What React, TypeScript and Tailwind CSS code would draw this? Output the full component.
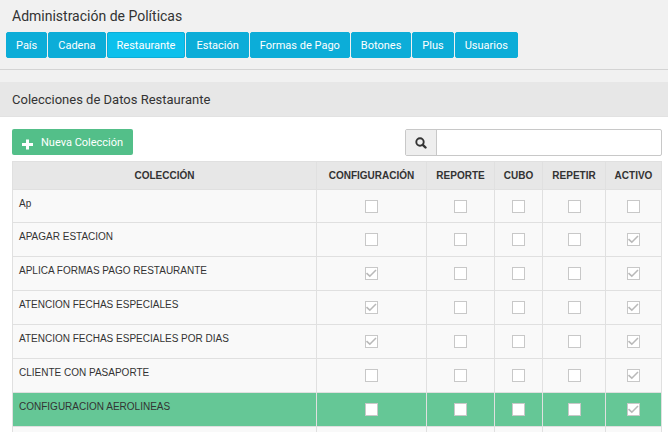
import { useState } from "react";

const tabs = ["País", "Cadena", "Restaurante", "Estación", "Formas de Pago", "Botones", "Plus", "Usuarios"];

const flags = ["Configuración", "Reporte", "Cubo", "Repetir", "Activo"];

type Row = { name: string; on: string[]; selected?: boolean };

const rows: Row[] = [
  { name: "Ap", on: [] },
  { name: "APAGAR ESTACION", on: ["Activo"] },
  { name: "APLICA FORMAS PAGO RESTAURANTE", on: ["Configuración", "Activo"] },
  { name: "ATENCION FECHAS ESPECIALES", on: ["Configuración", "Activo"] },
  { name: "ATENCION FECHAS ESPECIALES POR DIAS", on: ["Configuración", "Activo"] },
  { name: "CLIENTE CON PASAPORTE", on: ["Activo"] },
  { name: "CONFIGURACION AEROLINEAS", on: ["Activo"], selected: true },
];

function PlusIcon() {
  return (
    <svg viewBox="0 0 11 11" className="mt-0.5 size-[11px]" fill="currentColor" aria-hidden="true">
      <path d="M4 0.5h3v3.5h4v3h-4v3.5h-3V7H0V4h4z" />
    </svg>
  );
}

function SearchIcon() {
  return (
    <svg viewBox="0 0 12 12" className="size-3" fill="none" stroke="currentColor" aria-hidden="true">
      <circle cx="5" cy="5" r="3.7" strokeWidth="1.9" />
      <path d="M7.8 7.8 L10.5 10.5" strokeWidth="2.4" strokeLinecap="round" />
    </svg>
  );
}

function Check({ label, checked }: { label: string; checked: boolean }) {
  return (
    <span className="mx-auto grid size-[13px]">
      <input
        type="checkbox"
        aria-label={label}
        defaultChecked={checked}
        disabled
        className="peer col-start-1 row-start-1 size-[13px] appearance-none border border-[#c8c8c8] bg-white"
      />
      <svg
        viewBox="0 0 13 13"
        className="pointer-events-none invisible col-start-1 row-start-1 size-[13px] peer-checked:visible"
        fill="none"
        stroke="#b9b9b9"
        strokeWidth="1.6"
      >
        <path d="M1.5 6.2 L4.8 9.2 L11 3" />
      </svg>
    </span>
  );
}

export default function App() {
  const [tab, setTab] = useState("Restaurante");
  return (
    <div className="flex h-screen flex-col overflow-hidden bg-[#f1f1f1] font-['Liberation_Sans',Arial,sans-serif] text-[#333]">
      <header className="border-b border-[#d4d4d4] pt-1.5 pb-[11px]">
        <h1 className="px-3 font-[Roboto,sans-serif] text-[14px] leading-5">Administración de Políticas</h1>
        <nav className="mt-1.5 flex gap-px px-1.5">
          {tabs.map((t) => (
            <button
              key={t}
              type="button"
              onClick={() => setTab(t)}
              className={`h-[26px] rounded-[2px] border border-[#0cadd8] px-[9px] pt-0.5 font-[Roboto,sans-serif] text-[11px] whitespace-nowrap text-white ${
                t === tab ? "bg-[#0dc0ec]" : "bg-[#0cadd8]"
              }`}
            >
              {t}
            </button>
          ))}
        </nav>
      </header>

      <main className="mt-3 flex-1 bg-white">
        <h2 className="border-b border-[#e2e2e2] bg-[#e7e7e7] px-3 pt-0.5 font-[Roboto,sans-serif] text-[13px] leading-8">
          Colecciones de Datos Restaurante
        </h2>
        <div className="py-3 pr-1.5 pl-3">
          <div className="flex items-start justify-between">
            <button
              type="button"
              className="flex h-[26px] items-center gap-2 rounded-[2px] bg-[#53bf89] px-2.5 pt-0.5 font-[Roboto,sans-serif] text-[11px] text-white"
            >
              <PlusIcon />
              Nueva Colección
            </button>
            <div className="flex h-[27px] w-[257px] rounded-[2px] border border-[#c8c8c8] bg-white">
              <label
                htmlFor="buscar"
                aria-label="Buscar"
                className="flex w-[31px] items-center justify-center border-r border-[#c8c8c8] bg-[#eee]"
              >
                <SearchIcon />
              </label>
              <input id="buscar" type="text" className="min-w-0 flex-1 px-2 text-xs outline-none" />
            </div>
          </div>

          <table className="mt-[5px] w-full table-fixed border-collapse text-[10px] leading-4">
            <colgroup>
              <col />
              <col className="w-[110px]" />
              <col className="w-[68px]" />
              <col className="w-[48px]" />
              <col className="w-[63px]" />
              <col className="w-[56px]" />
            </colgroup>
            <thead>
              <tr className="h-7 bg-[#e7e7e7] uppercase">
                <th className="border border-[#e0e0e0] p-0">Colección</th>
                {flags.map((f) => (
                  <th key={f} className="border border-[#e0e0e0] p-0">
                    {f}
                  </th>
                ))}
              </tr>
            </thead>
            <tbody>
              {rows.map((r) => (
                <tr
                  key={r.name}
                  className={`h-[34px] first:h-[33px] ${r.selected ? "bg-[#65c796]" : "bg-[#f9f9f9]"}`}
                >
                  <td className="border border-[#e0e0e0] px-1.5 pt-1.5 pb-0 align-top">{r.name}</td>
                  {flags.map((f) => (
                    <td key={f} className="border border-[#e0e0e0] p-0 align-middle">
                      <Check label={`${r.name}: ${f}`} checked={r.on.includes(f)} />
                    </td>
                  ))}
                </tr>
              ))}
              <tr className="h-[34px] bg-[#f9f9f9]">
                <td className="border border-[#e0e0e0]" />
                {flags.map((f) => (
                  <td key={f} className="border border-[#e0e0e0]" />
                ))}
              </tr>
            </tbody>
          </table>
        </div>
      </main>
    </div>
  );
}
